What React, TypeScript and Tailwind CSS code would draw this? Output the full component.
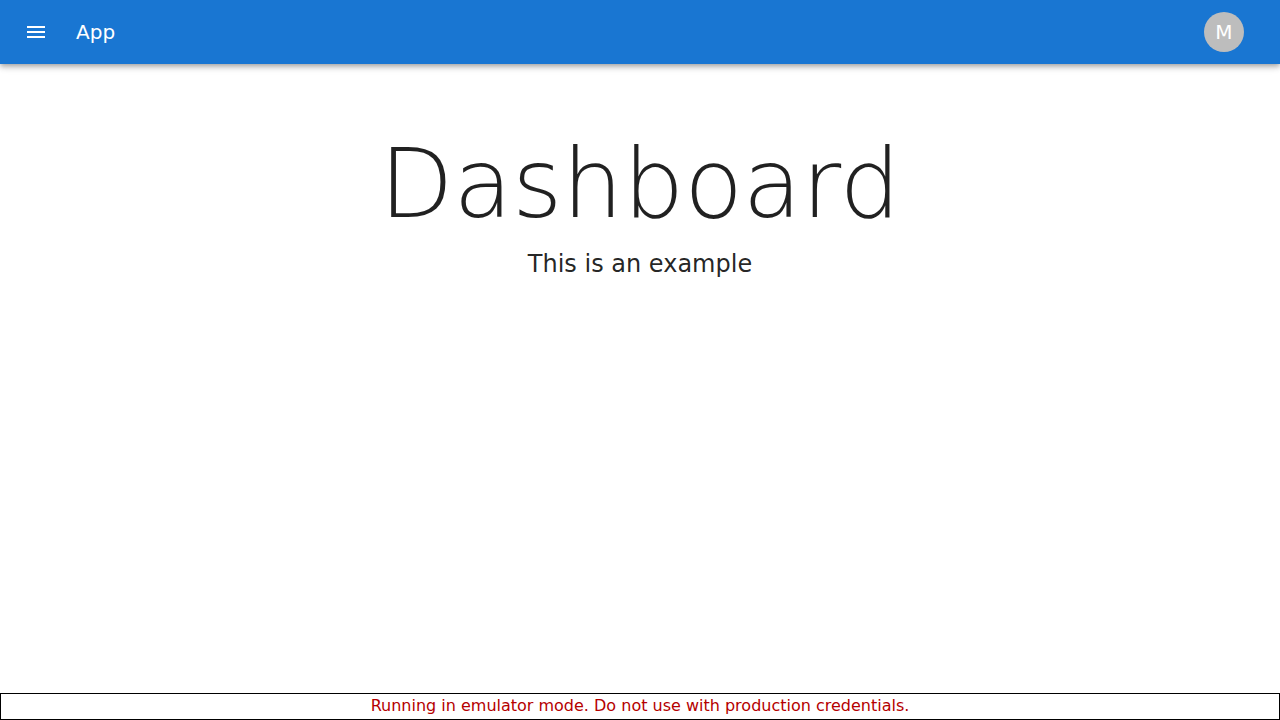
export default function App() {
  return (
    <div className="flex min-h-screen flex-col bg-white font-['DejaVu_Sans',sans-serif] text-black/87">
      <header className="flex h-16 items-center bg-[#1976d2] px-6 text-white shadow-[0px_2px_4px_-1px_rgba(0,0,0,0.2),0px_4px_5px_0px_rgba(0,0,0,0.14),0px_1px_10px_0px_rgba(0,0,0,0.12)]">
        <button type="button" aria-label="menu" className="-ml-3 mr-4 rounded-full p-3">
          <svg viewBox="0 0 24 24" className="size-6 fill-current" aria-hidden="true">
            <path d="M3 18h18v-2H3v2zm0-5h18v-2H3v2zm0-7v2h18V6H3z" />
          </svg>
        </button>
        <div className="grow text-xl">App</div>
        <button type="button" aria-label="Account" className="rounded-full p-3">
          <span className="flex size-10 items-center justify-center rounded-full bg-[#bdbdbd] text-xl leading-none">M</span>
        </button>
      </header>
      <main className="flex grow flex-col items-center gap-2 pt-16 text-center">
        <h1 className="text-[96px] leading-[112px] font-extralight">Dashboard</h1>
        <p className="text-2xl">This is an example</p>
      </main>
      <footer className="border border-black pb-px text-center leading-6 text-[#b50000]">
        Running in emulator mode. Do not use with production credentials.
      </footer>
    </div>
  );
}
